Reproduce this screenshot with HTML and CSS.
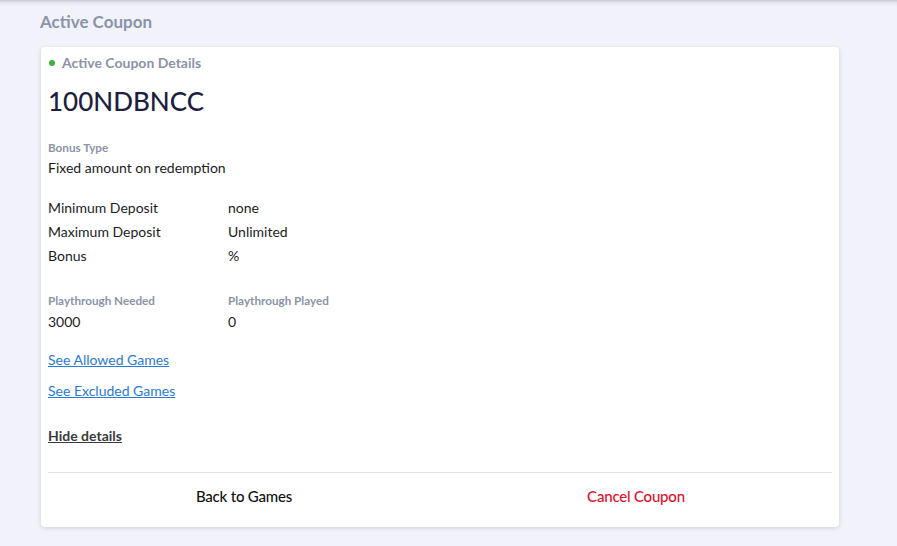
FILE: index.html
```html
<!DOCTYPE html>
<html lang="en">
<head>
  <meta charset="UTF-8" />
  <meta name="viewport" content="width=device-width, initial-scale=1.0"/>
  <title>Active Coupon</title>
  <link rel="stylesheet" href="styles.css">
</head>
<body>

  <div class="page">
    <h2 class="page-title">Active Coupon</h2>

    <div class="coupon-card">
      <div class="coupon-body">
        <div class="status"><span class="dot"></span>Active Coupon Details</div>
        <div class="code">100NDBNCC</div>

        <div class="field">
          <div class="label">Bonus Type</div>
          <div class="value">Fixed amount on redemption</div>
        </div>

        <div class="rows">
          <div>Minimum Deposit</div><div>none</div>
          <div>Maximum Deposit</div><div>Unlimited</div>
          <div>Bonus</div><div>%</div>
        </div>

        <div class="playthrough">
          <div class="label">Playthrough Needed</div>
          <div class="label">Playthrough Played</div>
          <div class="value">3000</div>
          <div class="value">0</div>
        </div>

        <a href="#" class="link">See Allowed Games</a>
        <a href="#" class="link">See Excluded Games</a>

        <a href="#" class="hide-link">Hide details</a>
      </div>

      <div class="actions">
        <button class="btn">Back to Games</button>
        <button class="btn btn-cancel">Cancel Coupon</button>
      </div>
    </div>
  </div>

</body>
</html>
```

FILE: styles.css
```css
* { margin: 0; padding: 0; box-sizing: border-box; }
body {
  font-family: Lato, "Open Sans", sans-serif;
  background: #f2f3fa;
  color: #1c1c1c;
  height: 546px;
  overflow: hidden;
}
.page {
  padding: 10px 58px 0 40px;
  background: linear-gradient(to bottom, #c9cad2 0, #e6e7ef 3px, #f2f3fa 7px);
  min-height: 100%;
}
.page-title {
  font-size: 17px;
  font-weight: 700;
  color: #8b93a7;
  line-height: 24px;
  margin-bottom: 13px;
}
.coupon-card {
  margin-left: 1px;
  background: #fff;
  border-radius: 4px;
  box-shadow: 0 1px 4px rgba(40, 45, 80, 0.18);
  padding: 0 7px;
}
.coupon-body {
  padding-top: 8px;
}
.status {
  display: flex;
  align-items: center;
  font-size: 14px;
  font-weight: 700;
  color: #8b93a7;
  line-height: 16px;
}
.dot {
  width: 6px;
  height: 6px;
  border-radius: 50%;
  background: #3bb03b;
  margin: 0 7px 0 1px;
}
.code {
  font-size: 26px;
  font-weight: 500;
  color: #1d1e40;
  line-height: 32px;
  margin-top: 14px;
}
.field { margin-top: 23px; }
.label {
  font-size: 11.7px;
  font-weight: 700;
  color: #8b93a7;
  line-height: 14px;
}
.value {
  font-size: 14px;
  line-height: 20px;
  margin-top: 4px;
}
.rows {
  display: grid;
  grid-template-columns: 180px 1fr;
  font-size: 14px;
  line-height: 24px;
  margin-top: 18px;
}
.playthrough {
  display: grid;
  grid-template-columns: 180px 1fr;
  margin-top: 25px;
}
.playthrough .value { margin-top: 5px; }
.link {
  display: block;
  width: max-content;
  font-size: 14px;
  line-height: 20px;
  color: #2a7ad5;
  text-decoration: underline;
  margin-top: 18px;
}
.link + .link { margin-top: 11px; }
.hide-link {
  display: block;
  width: max-content;
  font-size: 14px;
  font-weight: 700;
  line-height: 20px;
  color: #3a3a3a;
  text-decoration: underline;
  margin-top: 25px;
}
.actions {
  display: flex;
  border-top: 1px solid #e3e4ee;
  margin-top: 26px;
}
.btn {
  flex: 1;
  background: none;
  border: none;
  font-family: Lato, sans-serif;
  font-size: 15px;
  font-weight: 500;
  color: #111;
  height: 54px;
  padding-bottom: 8px;
  letter-spacing: -0.2px;
  cursor: pointer;
}
.btn-cancel { color: #e0102b; }
```
